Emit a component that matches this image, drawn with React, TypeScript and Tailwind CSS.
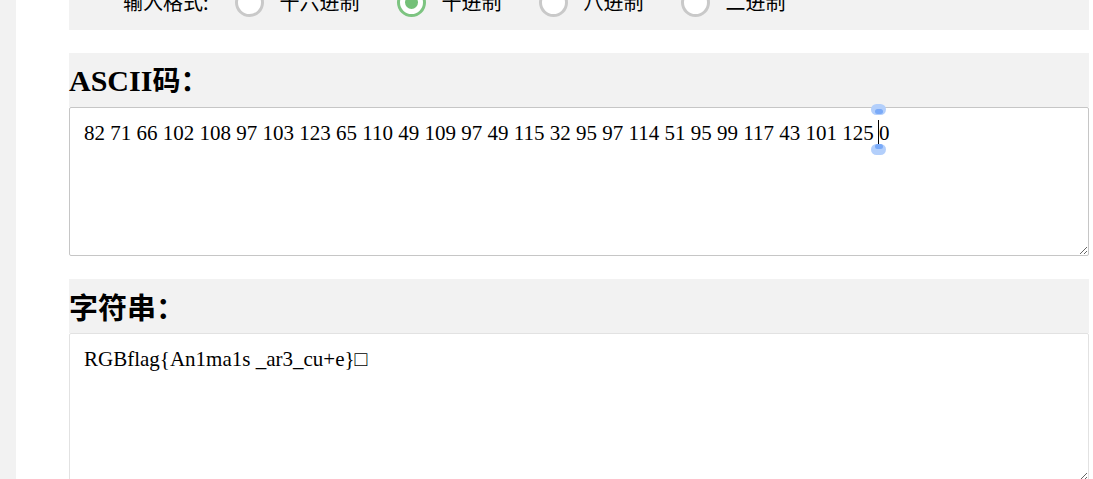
import React from "react";

const serif = { fontFamily: '"Liberation Serif", "Times New Roman", serif' };

function Radio({ checked }: { checked?: boolean }) {
  return checked ? (
    <span className="flex h-[29px] w-[29px] shrink-0 items-center justify-center rounded-full border-[3px] border-[#7dc481] bg-white">
      <span className="h-[13px] w-[13px] rounded-full bg-[#74c078]" />
    </span>
  ) : (
    <span className="h-[29px] w-[29px] shrink-0 rounded-full border-[3px] border-[#c9c9c9] bg-white" />
  );
}

export default function App() {
  const ascii =
    "82 71 66 102 108 97 103 123 65 110 49 109 97 49 115 32 95 97 114 51 95 99 117 43 101 125 0";
  const str = "RGBflag{An1ma1s _ar3_cu+e}\u25A1";
  const options = [
    { label: "十六进制", checked: false },
    { label: "十进制", checked: true },
    { label: "八进制", checked: false },
    { label: "二进制", checked: false },
  ];
  return (
    <div className="flex h-[479px] w-[1093px] overflow-hidden bg-white text-black">
      <div className="w-[16px] shrink-0 bg-[#f2f2f2]" />
      <div className="ml-[53px] mr-[4px] flex flex-1 flex-col">
        {/* Top box (scrolled) */}
        <div className="h-[30px] shrink-0 overflow-hidden bg-[#f2f2f2]">
          <div
            className="mt-[-13px] flex h-[30px] items-center pl-[54px] text-[20px] leading-none"
            style={{ fontFamily: '"Noto Sans CJK SC", sans-serif' }}
          >
            <span className="mr-[26px]">输入格式:</span>
            {options.map((o) => (
              <label key={o.label} className="mr-[37px] flex items-center">
                <Radio checked={o.checked} />
                <span className="ml-[16px]">{o.label}</span>
              </label>
            ))}
          </div>
        </div>

        <div className="mt-[23px] flex h-[54px] shrink-0 items-center bg-[#f2f2f2]">
          <h2 className="text-[30px] font-bold leading-none" style={serif}>
            ASCII
            <span className="text-[28px]" style={{ fontFamily: '"Noto Sans CJK SC", sans-serif' }}>
              码：
            </span>
          </h2>
        </div>
        <div className="relative h-[149px] shrink-0">
          <textarea
            readOnly
            value={ascii}
            className="block h-[149px] w-full resize-y rounded-[2px] border border-[#c6c6c6] bg-white px-[14px] py-[13px] text-[21px] leading-[1.2] text-black outline-none"
            style={serif}
          />
          {/* caret with selection handles */}
          <div className="pointer-events-none absolute left-[802px] top-[-3px] h-[11px] w-[15px] rounded-full bg-[#b3cffb]" />
          <div className="pointer-events-none absolute left-[806px] top-[2px] h-[5px] w-[8px] rounded-full bg-[#7aaaf8]" />
          <div className="pointer-events-none absolute left-[809px] top-[13px] h-[26px] w-[1px] bg-black" />
          <div className="pointer-events-none absolute left-[802px] top-[37px] h-[11px] w-[15px] rounded-full bg-[#b3cffb]" />
          <div className="pointer-events-none absolute left-[806px] top-[37px] h-[5px] w-[8px] rounded-full bg-[#7aaaf8]" />
        </div>

        <div className="mt-[23px] flex h-[54px] shrink-0 items-center bg-[#f2f2f2]">
          <h2
            className="text-[29px] font-bold leading-none"
            style={{ fontFamily: '"Noto Sans CJK SC", sans-serif' }}
          >
            字符串：
          </h2>
        </div>
        <textarea
          readOnly
          value={str}
          className="block h-[149px] w-full shrink-0 resize-y rounded-[2px] border border-[#e2e2e2] bg-white px-[14px] py-[13px] text-[21px] leading-[1.2] text-black outline-none"
          style={serif}
        />
      </div>
    </div>
  );
}
